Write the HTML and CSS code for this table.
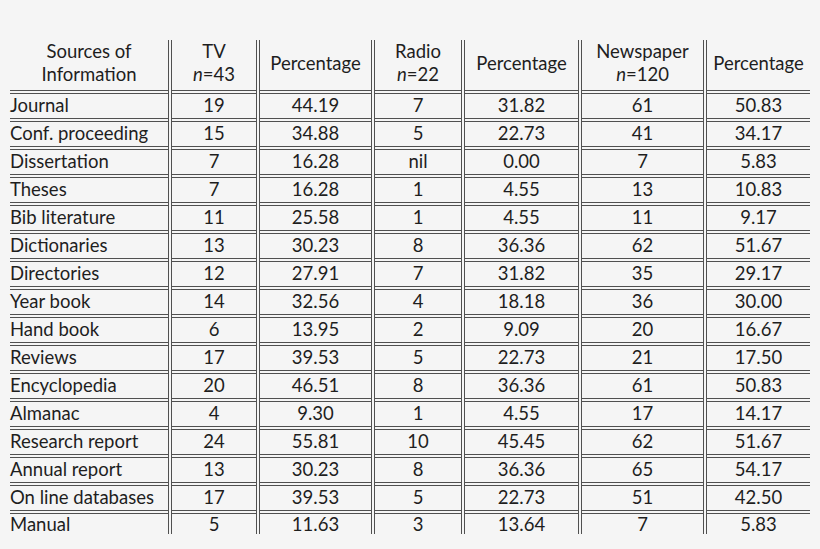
FILE: index.html
```html
<!DOCTYPE html>
<html>
<head>
<meta charset="utf-8">
<link rel="stylesheet" href="styles.css">
</head>
<body>
<table class="data">
<colgroup>
<col class="c1"><col class="c2"><col class="c3"><col class="c4"><col class="c5"><col class="c6"><col class="c7">
</colgroup>
<thead>
<tr>
<th class="src">Sources of<br>Information</th>
<th>TV<br><i>n</i>=43</th>
<th>Percentage</th>
<th>Radio<br><i>n</i>=22</th>
<th>Percentage</th>
<th>Newspaper<br><i>n</i>=120</th>
<th>Percentage</th>
</tr>
</thead>
<tbody>
<tr><td>Journal</td><td>19</td><td>44.19</td><td>7</td><td>31.82</td><td>61</td><td>50.83</td></tr>
<tr><td>Conf. proceeding</td><td>15</td><td>34.88</td><td>5</td><td>22.73</td><td>41</td><td>34.17</td></tr>
<tr><td>Dissertation</td><td>7</td><td>16.28</td><td>nil</td><td>0.00</td><td>7</td><td>5.83</td></tr>
<tr><td>Theses</td><td>7</td><td>16.28</td><td>1</td><td>4.55</td><td>13</td><td>10.83</td></tr>
<tr><td>Bib literature</td><td>11</td><td>25.58</td><td>1</td><td>4.55</td><td>11</td><td>9.17</td></tr>
<tr><td>Dictionaries</td><td>13</td><td>30.23</td><td>8</td><td>36.36</td><td>62</td><td>51.67</td></tr>
<tr><td>Directories</td><td>12</td><td>27.91</td><td>7</td><td>31.82</td><td>35</td><td>29.17</td></tr>
<tr><td>Year book</td><td>14</td><td>32.56</td><td>4</td><td>18.18</td><td>36</td><td>30.00</td></tr>
<tr><td>Hand book</td><td>6</td><td>13.95</td><td>2</td><td>9.09</td><td>20</td><td>16.67</td></tr>
<tr><td>Reviews</td><td>17</td><td>39.53</td><td>5</td><td>22.73</td><td>21</td><td>17.50</td></tr>
<tr><td>Encyclopedia</td><td>20</td><td>46.51</td><td>8</td><td>36.36</td><td>61</td><td>50.83</td></tr>
<tr><td>Almanac</td><td>4</td><td>9.30</td><td>1</td><td>4.55</td><td>17</td><td>14.17</td></tr>
<tr><td>Research report</td><td>24</td><td>55.81</td><td>10</td><td>45.45</td><td>62</td><td>51.67</td></tr>
<tr><td>Annual report</td><td>13</td><td>30.23</td><td>8</td><td>36.36</td><td>65</td><td>54.17</td></tr>
<tr><td>On line databases</td><td>17</td><td>39.53</td><td>5</td><td>22.73</td><td>51</td><td>42.50</td></tr>
<tr class="last"><td>Manual</td><td>5</td><td>11.63</td><td>3</td><td>13.64</td><td>7</td><td>5.83</td></tr>
</tbody>
</table>
</body>
</html>
```
FILE: styles.css
```css
html, body {
  margin: 0;
  padding: 0;
  background: #f5f5f5;
}
body {
  width: 820px;
  height: 549px;
  overflow: hidden;
  font-family: Lato, "Liberation Sans", sans-serif;
  color: #1e1e1e;
}
.data {
  margin: 40px 0 0 10px;
  width: 800px;
  border-collapse: collapse;
  table-layout: fixed;
  font-size: 18.5px;
}
.c1 { width: 160px; }
.c2 { width: 88px; }
.c3 { width: 115px; }
.c4 { width: 90px; }
.c5 { width: 117px; }
.c6 { width: 125px; }
.c7 { width: 105px; }
.data th {
  font-weight: normal;
  height: 43px;
  line-height: 23px;
  padding: 0 0 4px 0;
  vertical-align: middle;
  text-align: center;
  border-left: 4px double #505050;
}
.data th:first-child { border-left: none; }
.data th i { font-style: italic; }
.data td {
  height: 22px;
  line-height: 22px;
  padding: 0 0 2px 0;
  text-align: center;
  border-top: 4px double #505050;
  border-left: 4px double #505050;
  white-space: nowrap;
}
.data td:first-child {
  text-align: left;
  border-left: none;
}
.data tr.last td {
  height: 20px;
  line-height: 20px;
  padding: 0;
}
```
